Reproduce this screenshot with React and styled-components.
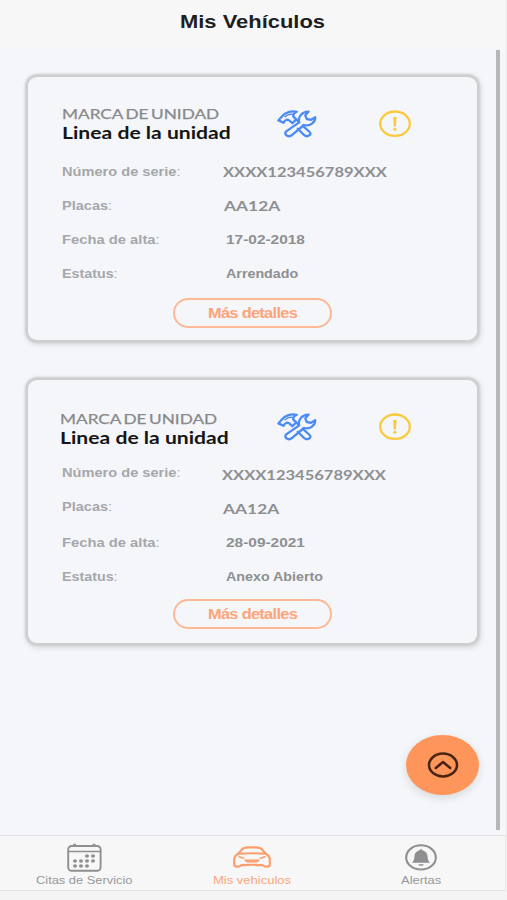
import React, { useLayoutEffect, useRef, useState } from 'react';
import styled, { createGlobalStyle } from 'styled-components';

const vehicles = [
    {
        brand: 'MARCA DE UNIDAD',
        line: 'Linea de la unidad',
        gap: 35,
        headTop: 28,
        headLeft: 33.5,
        iconTop: 33,
        rowsTop: 78,
        buttonTop: 7,
        rows: [
            { label: 'Número de serie', labelWidth: 118, value: 'XXXX123456789XXX', width: 164, left: 161.5, lato: true, lift: 1 },
            { label: 'Placas', labelWidth: 50, value: 'AA12A', width: 56, left: 162.5, lato: true, lift: 1 },
            { label: 'Fecha de alta', labelWidth: 98, value: '17-02-2018', width: 79, left: 164.5, lift: 1 },
            { label: 'Estatus', labelWidth: 56, value: 'Arrendado', width: 72, left: 164.5, lift: 1 },
        ],
    },
    {
        brand: 'MARCA DE UNIDAD',
        line: 'Linea de la unidad',
        gap: 0,
        headTop: 30,
        headLeft: 32,
        iconTop: 32.5,
        rowsTop: 78,
        buttonTop: 5,
        rows: [
            { label: 'Número de serie', labelWidth: 118, value: 'XXXX123456789XXX', width: 164, left: 160, lato: true, lift: 4 },
            { label: 'Placas', labelWidth: 50, value: 'AA12A', width: 56, left: 161.5, lato: true, lift: 4 },
            { label: 'Fecha de alta', labelWidth: 98, value: '28-09-2021', width: 79, left: 164, lift: 1 },
            { label: 'Estatus', labelWidth: 56, value: 'Anexo Abierto', width: 97, left: 164, lift: 1 },
        ],
    },
];

// Stretches its text sideways until it fills the given width
function WideText({ width, children, ...rest }) {
    const ref = useRef(null);
    const [scale, setScale] = useState(1);

    useLayoutEffect(() => {
        setScale(width / ref.current.offsetWidth);
    }, [width]);

    return (
        <TextBox $width={width} {...rest}>
            <TextInner ref={ref} style={{ transform: `scaleX(${scale})` }}>{children}</TextInner>
        </TextBox>
    )
}

function ToolsIcon() {
    return (
        <svg width="40" height="28" viewBox="0 0 40 28" fill="none" stroke="#4a8bf5" strokeWidth="2.3" strokeLinejoin="round" strokeLinecap="round">
            <path d="M1.4 10.4 L4.4 7 C8 2 14.6 .6 19.8 1.8 C16.8 3 15.8 4.8 16.4 6.6 L19.2 9.4 L15.4 13.2 L12.2 10.4 C10 9 8 9.8 6.6 12.8 Z" />
            <path d="M8 6.8 C10.4 4.8 12.6 4 15 4.4" strokeWidth="1.4" />
            <path d="M19.2 9.4 L21 11.2 M20.8 18.8 L27.3 25.2 C30.3 27.6 35.6 24.8 32.6 22 L25.8 15.8" />
            <path d="M9.2 21.4 L22.2 12.4 C20.8 6.6 25.2 1.4 31.6 1.6 L28.2 5.4 L29.8 9 L34 9.8 L38.2 7.2 C38.6 12.4 33 16.4 27 15 L14.8 25.2 C11.8 27.8 6.2 24.6 9.2 21.4 Z" />
        </svg>
    )
}

function WarningIcon() {
    return (
        <svg width="32" height="28" viewBox="0 0 32 28" fill="none">
            <ellipse cx="16" cy="13.7" rx="14.8" ry="12.2" stroke="#fac93c" strokeWidth="2.3" />
            <path d="M14.2 7 H17.6 L17 16.6 H14.8 Z" fill="#fac93c" />
            <ellipse cx="15.9" cy="19.4" rx="1.7" ry="1.4" fill="#fac93c" />
        </svg>
    )
}

function CalendarIcon() {
    const dots = [[20, 13], [26, 13], [8, 18], [14, 18], [20, 18], [26, 18], [8, 23], [14, 23], [20, 23]];
    return (
        <svg width="35" height="29" viewBox="0 0 35 29" fill="none" stroke="#8f8f92">
            <rect x="1.2" y="3" width="32.4" height="24.8" rx="3.5" strokeWidth="1.9" />
            <path d="M1.2 8.5 H33.6" strokeWidth="1.5" />
            <path d="M7.6 .8 V4 M27 .8 V4" strokeWidth="2.8" />
            {dots.map(([x, y]) => (
                <ellipse key={`${x}-${y}`} cx={x} cy={y} rx="2" ry="1.7" fill="#8f8f92" stroke="none" />
            ))}
        </svg>
    )
}

function CarIcon() {
    return (
        <svg width="38" height="22" viewBox="0 0 38 22" fill="none" stroke="#fc9d6c" strokeWidth="2.2" strokeLinejoin="round" strokeLinecap="round">
            <path d="M5.2 7.8 L8.8 3.6 C10 2 12 1.4 15 1.4 H23 C26 1.4 28 2 29.2 3.6 L32.8 7.8 C35.4 9 36.8 11.2 36.8 14 V18.2 C36.8 19.8 36 20.6 34.4 20.6 H32.8 C31.2 20.6 30.6 19.4 29 19.2 C22 18.6 16 18.6 9 19.2 C7.4 19.4 6.8 20.6 5.2 20.6 H3.6 C2 20.6 1.2 19.8 1.2 18.2 V14 C1.2 11.2 2.6 9 5.2 7.8 Z" />
            <path d="M6 7.8 C14 7.2 24 7.2 32 7.8" strokeWidth="1.9" />
            <path d="M6.2 10.8 L10.6 12.2 M31.8 10.8 L27.4 12.2" strokeWidth="1.6" />
            <path d="M12 14.2 H26 L24 15.8 H14 Z" strokeWidth="1.3" fill="#fc9d6c" />
        </svg>
    )
}

function BellIcon() {
    return (
        <svg width="32" height="27" viewBox="0 0 32 27" fill="none">
            <ellipse cx="16" cy="13.4" rx="14.8" ry="12.1" stroke="#8f8f92" strokeWidth="2.1" />
            <path d="M16 5.2 C17 5.2 17.4 5.8 17.5 6.4 C21.3 7.1 22.4 9.8 22.6 13 C22.8 16 23.4 17 25 18.8 H7 C8.6 17 9.2 16 9.4 13 C9.6 9.8 10.7 7.1 14.5 6.4 C14.6 5.8 15 5.2 16 5.2 Z" fill="#8f8f92" />
            <path d="M13.2 20.2 H18.8 C18.2 22.2 13.8 22.2 13.2 20.2 Z" fill="#8f8f92" />
        </svg>
    )
}

function VehicleCard({ vehicle }) {
    return (
        <Card $gap={vehicle.gap}>
            <CardHead $height={vehicle.rowsTop}>
                <Names $top={vehicle.headTop} $left={vehicle.headLeft}>
                    <Brand width={157}>{vehicle.brand}</Brand>
                    <Model width={169}>{vehicle.line}</Model>
                </Names>
                <IconSlot $top={vehicle.iconTop} $left={249}><ToolsIcon /></IconSlot>
                <IconSlot $top={vehicle.iconTop} $left={351}><WarningIcon /></IconSlot>
            </CardHead>
            {vehicle.rows.map((row) => (
                <Row key={row.label}>
                    <LabelCell $width={row.left} $lift={row.lift}>
                        <Label width={row.labelWidth}>{row.label}<Colon>:</Colon></Label>
                    </LabelCell>
                    <Value width={row.width} $lato={row.lato}>{row.value}</Value>
                </Row>
            ))}
            <DetailsButton $top={vehicle.buttonTop}>
                <ButtonText width={89}>Más detalles</ButtonText>
            </DetailsButton>
        </Card>
    )
}

function App() {
    return (
        <Page>
            <GlobalStyle />
            <Header>
                <Title width={145}>Mis Vehículos</Title>
            </Header>
            <Content>
                <List>
                    {vehicles.map((vehicle, index) => (
                        <VehicleCard key={index} vehicle={vehicle} />
                    ))}
                </List>
                <ScrollThumb />
                <UpButton aria-label="Subir">
                    <svg width="32" height="26" viewBox="0 0 32 26" fill="none" stroke="#4a2412">
                        <ellipse cx="16" cy="13" rx="14" ry="11.4" strokeWidth="2.5" />
                        <path d="M8.8 16 L16 10 L23.2 16" strokeWidth="2.6" strokeLinecap="round" strokeLinejoin="round" />
                    </svg>
                </UpButton>
            </Content>
            <TabBar>
                <Tab>
                    <TabIcon><CalendarIcon /></TabIcon>
                    <TabLabel width={97}>Citas de Servicio</TabLabel>
                </Tab>
                <Tab $active>
                    <TabIcon><CarIcon /></TabIcon>
                    <TabLabel width={78}>Mis vehiculos</TabLabel>
                </Tab>
                <Tab>
                    <TabIcon><BellIcon /></TabIcon>
                    <TabLabel width={40}>Alertas</TabLabel>
                </Tab>
            </TabBar>
        </Page>
    )
}

export default App;

const GlobalStyle = createGlobalStyle`
    body{
        margin:0;
        background-color:#f4f4f4;
    }
    *{
        box-sizing:border-box;
    }
`

const Page = styled.div`
    width:507px;
    height:900px;
    display:flex;
    flex-direction:column;
    overflow:hidden;
    background-color:#f4f4f4;
    font-family:"Liberation Sans", Arial, sans-serif;
`

const TextBox = styled.span`
    display:block;
    flex:none;
    width:${props => props.$width}px;
    white-space:nowrap;
`

const TextInner = styled.span`
    display:inline-block;
    transform-origin:left center;
`

const Header = styled.header`
    height:50px;
    padding-top:10px;
    padding-left:179.5px;
    background:linear-gradient(#f7f7f7 44px, #f4f6fa);
    border-right:1px solid #ececec;
`

const Title = styled(WideText)`
    font-size:18px;
    line-height:24px;
    font-weight:bold;
    color:#1e1e1e;
`

const Content = styled.main`
    position:relative;
    height:785px;
    display:flex;
    background-color:#f4f6fa;
    border-right:1px solid #ececee;
`

const List = styled.div`
    width:496px;
    padding:27px 19px 0 28px;
`

const ScrollThumb = styled.div`
    width:4px;
    height:780px;
    background-color:#b6b7b9;
`

const Card = styled.section`
    width:449px;
    height:263px;
    margin-bottom:${props => props.$gap + 5}px;
    border-radius:9px;
    background-color:#f4f6fa;
    box-shadow:0 0 2px 3px #cdced0, 1px 2px 5px 3px #d9dadc;
`

const CardHead = styled.div`
    display:flex;
    height:${props => props.$height}px;
`

const Names = styled.div`
    width:0;
    padding-top:${props => props.$top}px;
    margin-left:${props => props.$left}px;
    margin-right:${props => -props.$left}px;
    font-family:Lato, sans-serif;
`

const Brand = styled(WideText)`
    font-size:13.5px;
    line-height:18px;
    word-spacing:-1.5px;
    color:#89898b;
    -webkit-text-stroke:.25px #89898b;
`

const Model = styled(WideText)`
    font-size:17px;
    line-height:19px;
    font-weight:bold;
    color:#151515;
`

const IconSlot = styled.div`
    width:0;
    padding-top:${props => props.$top}px;
    margin-left:${props => props.$left}px;
    margin-right:${props => -props.$left}px;

    svg{
        display:block;
    }
`

const Row = styled.div`
    display:flex;
    align-items:center;
    height:34px;
    padding-left:33.5px;
`

const LabelCell = styled.div`
    width:${props => props.$width}px;
    padding-bottom:${props => props.$lift}px;
`

const Label = styled(WideText)`
    font-size:12.5px;
    line-height:16px;
    font-weight:bold;
    color:#a6a7aa;
`

const Colon = styled.span`
    font-weight:normal;
`

const Value = styled(WideText)`
    font-family:${props => props.$lato ? 'Lato, sans-serif' : 'inherit'};
    font-size:${props => props.$lato ? '13px' : '12.5px'};
    line-height:16px;
    font-weight:bold;
    color:#8e8f91;
`

const DetailsButton = styled.button`
    display:flex;
    align-items:center;
    justify-content:center;
    width:159px;
    height:30px;
    margin:${props => props.$top}px 0 0 145px;
    padding:0;
    border:2px solid #fdb895;
    border-radius:15px;
    background:none;
    color:#fca579;
    font-family:inherit;
`

const ButtonText = styled(WideText)`
    font-size:14px;
    line-height:18px;
    font-weight:bold;
    letter-spacing:-.6px;
    text-align:left;
`

const UpButton = styled.button`
    position:absolute;
    right:27px;
    bottom:40px;
    display:flex;
    align-items:center;
    justify-content:center;
    width:73px;
    height:60px;
    padding:0;
    border:none;
    border-radius:50%;
    background-color:#fe965b;
    box-shadow:0 3px 10px rgba(0, 0, 0, .12);
`

const TabBar = styled.nav`
    display:flex;
    width:506px;
    height:56px;
    border-top:1.5px solid #e3e3e4;
    border-bottom:1px solid #e2e2e3;
    border-right:1px solid #e8e8e8;
    background-color:#f7f7f7;
`

const Tab = styled.div`
    flex:1;
    display:flex;
    flex-direction:column;
    align-items:center;
    color:${props => props.$active ? '#fba57c' : '#98989b'};
`

const TabIcon = styled.div`
    display:flex;
    align-items:center;
    height:42px;

    svg{
        display:block;
    }
`

const TabLabel = styled(WideText)`
    margin-top:-5px;
    font-size:11px;
    line-height:14px;
`
